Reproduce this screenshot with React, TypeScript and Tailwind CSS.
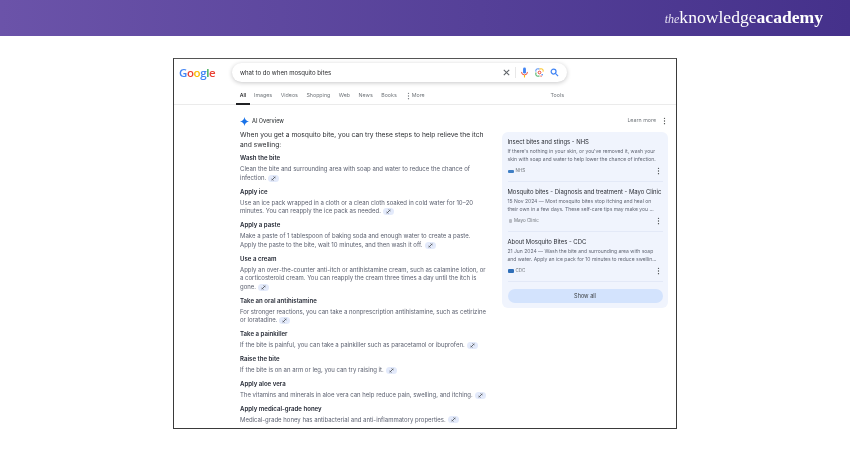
import React from "react";

const sans = "font-['Inter','Liberation_Sans',sans-serif]";

function LinkChip() {
  return (
    <span className="inline-flex items-center justify-center align-middle ml-[2px] w-[11px] h-[7px] rounded-full bg-[#e3eafb]">
      <svg width="5" height="5" viewBox="0 0 10 10" fill="none" stroke="#5f6368" strokeWidth="2" strokeLinecap="round">
        <path d="M2 8 8 2M1.500 6 4 8.500M6 1.500 8.500 4" />
      </svg>
    </span>
  );
}

function Dots({ color = "#444746" }: { color?: string }) {
  return (
    <svg width="3" height="8" viewBox="0 0 3 8" fill={color}>
      <circle cx="1.5" cy="1.3" r="0.65" />
      <circle cx="1.5" cy="4" r="0.65" />
      <circle cx="1.5" cy="6.7" r="0.65" />
    </svg>
  );
}

const steps: { t: string; d: string[] }[] = [
  { t: "Wash the bite", d: ["Clean the bite and surrounding area with soap and water to reduce the chance of", "infection."] },
  { t: "Apply ice", d: ["Use an ice pack wrapped in a cloth or a clean cloth soaked in cold water for 10–20", "minutes. You can reapply the ice pack as needed."] },
  { t: "Apply a paste", d: ["Make a paste of 1 tablespoon of baking soda and enough water to create a paste.", "Apply the paste to the bite, wait 10 minutes, and then wash it off."] },
  { t: "Use a cream", d: ["Apply an over-the-counter anti-itch or antihistamine cream, such as calamine lotion, or", "a corticosteroid cream. You can reapply the cream three times a day until the itch is", "gone."] },
  { t: "Take an oral antihistamine", d: ["For stronger reactions, you can take a nonprescription antihistamine, such as cetirizine", "or loratadine."] },
  { t: "Take a painkiller", d: ["If the bite is painful, you can take a painkiller such as paracetamol or ibuprofen."] },
  { t: "Raise the bite", d: ["If the bite is on an arm or leg, you can try raising it."] },
  { t: "Apply aloe vera", d: ["The vitamins and minerals in aloe vera can help reduce pain, swelling, and itching."] },
  { t: "Apply medical-grade honey", d: ["Medical-grade honey has antibacterial and anti-inflammatory properties."] },
];

const sources = [
  { t: "Insect bites and stings - NHS", l: ["If there's nothing in your skin, or you've removed it, wash your", "skin with soap and water to help lower the chance of infection."], s: "NHS", c: "w-[6px] h-[3px] bg-[#3f7fc4]" },
  { t: "Mosquito bites - Diagnosis and treatment - Mayo Clinic", l: ["15 Nov 2024 — Most mosquito bites stop itching and heal on", "their own in a few days. These self-care tips may make you ..."], s: "Mayo Clinic", c: "w-[3px] h-[4px] ml-[1.5px] mr-[1.5px] bg-[#b9bcc4]" },
  { t: "About Mosquito Bites - CDC", l: ["21 Jun 2024 — Wash the bite and surrounding area with soap", "and water. Apply an ice pack for 10 minutes to reduce swellin..."], s: "CDC", c: "w-[6px] h-[4px] bg-[#2f6fb8]" },
];

const tabs = ["Images", "Videos", "Shopping", "Web", "News", "Books"];

export default function App() {
  return (
    <div className={`w-[850px] h-[450px] bg-white overflow-hidden ${sans}`}>
      <header className="h-[36px] bg-gradient-to-r from-[#6b53a9] to-[#45318b] flex items-center justify-end pr-[27px]">
        <div className="font-['Liberation_Serif',serif] text-white text-[17.6px] leading-none flex items-baseline blur-[0.25px]">
          <span className="italic text-[12px] text-[#e4dff2]">the</span>
          <span>knowledge</span>
          <span className="font-bold">academy</span>
        </div>
      </header>

      <div className="ml-[173px] mt-[22px] w-[504px] h-[371px] border border-[#3a3a3a] border-t-[#555] overflow-hidden flex flex-col">
        <div className="h-[46px] border-b border-[#ebebeb] shrink-0 blur-[0.3px]">
          <div className="flex items-center pt-[3px] h-[24px]">
            <div className="w-[58px] pl-[5px] font-['Open_Sans',sans-serif] text-[11.5px] font-semibold leading-none tracking-[-0.4px]">
              <span className="text-[#4285f4]">G</span>
              <span className="text-[#ea4335]">o</span>
              <span className="text-[#fbbc05]">o</span>
              <span className="text-[#4285f4]">g</span>
              <span className="text-[#34a853]">l</span>
              <span className="text-[#ea4335]">e</span>
            </div>
            <div className="w-[335px] h-[19px] rounded-full bg-white shadow-[0_1px_4px_rgba(32,33,36,0.25)] flex items-center pl-[8px] pr-[8px] text-[6.05px] text-[#2a2b2e]">
              <span className="flex-1">what to do when mosquito bites</span>
              <svg width="9" height="9" viewBox="0 0 10 10" stroke="#5f6368" strokeWidth="1.2" fill="none"><path d="M2 2l6 6M8 2l-6 6" /></svg>
              <span className="w-px h-[11px] bg-[#e8e8e8] mx-[4px]" />
              <svg width="9" height="11" viewBox="0 0 8 10" className="mr-[6px]">
                <rect x="2.7" y="0.5" width="2.6" height="5.5" rx="1.3" fill="#4285f4" />
                <path d="M1.3 4.5a2.7 2.7 0 0 0 5.400 0" stroke="#ea4335" strokeWidth="0.8" fill="none" />
                <path d="M4 7.200v2.300" stroke="#fbbc05" strokeWidth="1" />
              </svg>
              <svg width="9" height="9" viewBox="0 0 10 10" fill="none" strokeWidth="1.1" className="mr-[6px]">
                <path d="M1 4V2.500A1.500 1.500 0 0 1 2.500 1H5" stroke="#4285f4" />
                <path d="M5 1h2.500A1.500 1.500 0 0 1 9 2.500V4" stroke="#fbbc05" />
                <path d="M1 5v2.500A1.500 1.500 0 0 0 2.500 9H5" stroke="#34a853" />
                <path d="M6 9h1.500" stroke="#ea4335" />
                <circle cx="5" cy="5" r="1.500" stroke="#ea4335" />
                <circle cx="8" cy="7.500" r="0.900" fill="#4285f4" stroke="none" />
              </svg>
              <svg width="9" height="9" viewBox="0 0 10 10" fill="none" stroke="#4285f4" strokeWidth="1.4">
                <circle cx="4" cy="4" r="2.700" />
                <path d="M6 6l3 3" />
              </svg>
            </div>
          </div>
          <div className="flex items-stretch h-[20px] mt-[1.5px] ml-[62px] w-[328px] text-[5.3px] text-[#70757a]">
            <div className="w-[14px] pt-[7.5px] text-center border-b-2 border-[#202124] text-[#202124] font-medium">All</div>
            <div className="flex gap-[8.5px] ml-[4px] pt-[7.5px]">
              {tabs.map((t) => <span key={t}>{t}</span>)}
            </div>
            <span className="ml-[10px] flex items-start gap-[2px] pt-[7.5px]"><span className="mt-[-0.5px]"><Dots color="#70757a" /></span>More</span>
            <span className="ml-auto pt-[7.5px]">Tools</span>
          </div>
        </div>

        <div className="flex flex-1 min-h-0 blur-[0.3px]">
          <div className="w-[328px] pl-[66px] pt-[10px] shrink-0">
            <div className="flex items-center h-[12px] gap-[3px]">
              <svg width="9" height="9" viewBox="0 0 10 10">
                <path d="M5 0c.5 2.800 2 4.500 5 5-3 .5-4.500 2.200-5 5-.5-2.800-2-4.500-5-5 3-.5 4.500-2.200 5-5z" fill="#1a73e8" />
              </svg>
              <span className="text-[5.5px] font-medium text-[#3c4043]">AI Overview</span>
            </div>
            <p className="mt-[3px] text-[6.7px] leading-[10px] text-[#2b2d31] w-[250px]">
              When you get a mosquito bite, you can try these steps to help relieve the itch and swelling:
            </p>
            <div className="mt-[3px] flex flex-col gap-[4.1px]">
              {steps.map((s) => (
                <div key={s.t}>
                  <h3 className="text-[6.1px] leading-[10.500px] font-semibold text-[#1f2430]">{s.t}</h3>
                  <div className="text-[6px] leading-[8.700px] text-[#5c6170] whitespace-nowrap pt-[1.500px]">
                    {s.d.map((l, i) => (
                      <div key={i}>
                        {l}
                        {i === s.d.length - 1 && <LinkChip />}
                      </div>
                    ))}
                  </div>
                </div>
              ))}
            </div>
          </div>

          <div className="w-[166px] pt-[10px] shrink-0">
            <div className="flex items-center justify-end h-[12px] text-[5.300px] text-[#70757a] gap-[7px] pr-[2px]">
              <span>Learn more</span>
              <Dots />
            </div>
            <div className="mt-[5px] rounded-[6px] bg-[#f0f4fd] h-[176px] px-[5.500px] pt-[5.500px]">
              {sources.map((s) => (
                <div key={s.s} className="h-[44.500px] border-b border-[#e3e9f7] mb-[5.500px]">
                  <div className="text-[5.930px] leading-[8px] text-[#2a2d34] whitespace-nowrap">{s.t}</div>
                  <div className="text-[5.030px] leading-[8.500px] text-[#636875] whitespace-nowrap mt-[1px]">
                    {s.l.map((x) => <div key={x}>{x}</div>)}
                  </div>
                  <div className="flex items-center h-[9px] mt-[3px] text-[4.500px] text-[#70757a]">
                    <span className={`rounded-[1px] mr-[2px] ${s.c}`} />
                    <span className="flex-1">{s.s}</span>
                    <span className="mr-[3px]"><Dots /></span>
                  </div>
                </div>
              ))}
              <div className="mt-[7px] h-[14px] rounded-full bg-[#d3e3fd] flex items-center justify-center text-[5.500px] text-[#3c4043]">Show all</div>
            </div>
          </div>
        </div>
      </div>
    </div>
  );
}
